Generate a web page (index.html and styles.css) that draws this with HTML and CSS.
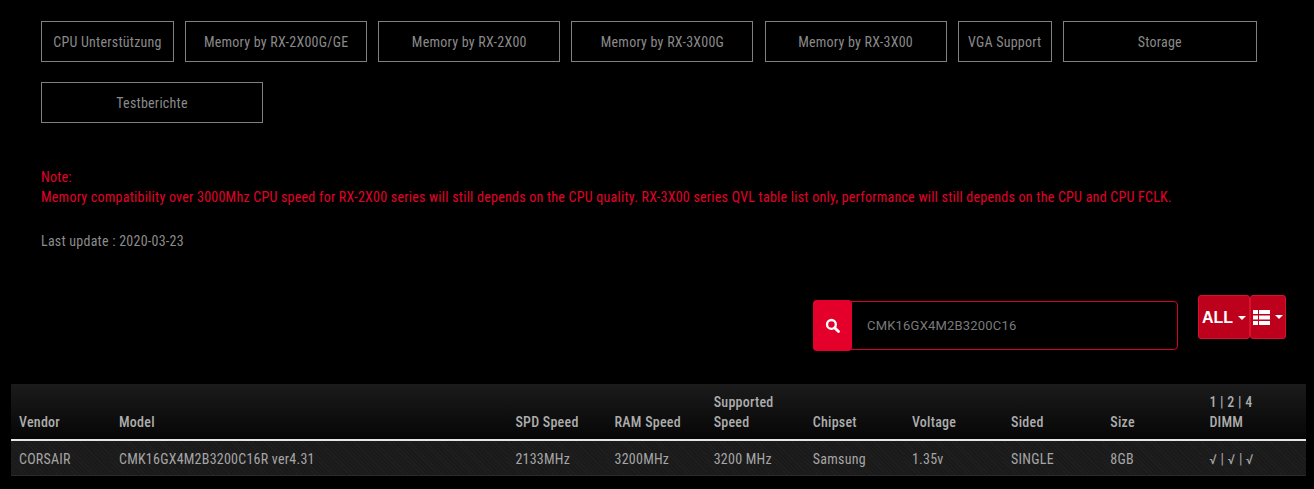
FILE: index.html
```html
<!DOCTYPE html>
<html lang="de">
<head>
<meta charset="utf-8">
<title>Memory Support</title>
<link rel="stylesheet" href="styles.css">
</head>
<body>
<nav class="tabs">
  <a class="tab w133">CPU Unterstützung</a>
  <a class="tab w182">Memory by RX-2X00G/GE</a>
  <a class="tab w182">Memory by RX-2X00</a>
  <a class="tab w182">Memory by RX-3X00G</a>
  <a class="tab w182">Memory by RX-3X00</a>
  <a class="tab w94">VGA Support</a>
  <a class="tab w194">Storage</a>
  <a class="tab w222">Testberichte</a>
</nav>
<section class="notes">
  <p class="note">Note:<br>Memory compatibility over 3000Mhz CPU speed for RX-2X00 series will still depends on the CPU quality. RX-3X00 series QVL table list only, performance will still depends on the CPU and CPU FCLK.</p>
  <p class="update">Last update : 2020-03-23</p>
</section>
<section class="tools">
  <div class="search">
    <span class="search-btn">
      <svg width="15" height="15" viewBox="0 0 14 14" aria-hidden="true"><circle cx="6" cy="6" r="4.1" fill="none" stroke="#fff" stroke-width="2.2"/><path d="M9 9l3.6 3.6" stroke="#fff" stroke-width="2.6" stroke-linecap="round"/></svg>
    </span>
    <span class="search-text">CMK16GX4M2B3200C16</span>
  </div>
  <div class="drop">
    <button class="drop-btn all">ALL<i class="caret"></i></button>
    <button class="drop-btn list">
      <svg width="17" height="15" viewBox="0 0 17 15" aria-hidden="true"><path fill="#fff" d="M0 0h5v4H0zM6 0h11v4H6zM0 5.5h5v4H0zM6 5.5h11v4H6zM0 11h5v4H0zM6 11h11v4H6z"/></svg><i class="caret"></i>
    </button>
  </div>
</section>
<table class="qvl">
  <thead>
    <tr>
      <th class="c-vendor">Vendor</th>
      <th class="c-model">Model</th>
      <th class="c">SPD Speed</th>
      <th class="c">RAM Speed</th>
      <th class="c">Supported<br>Speed</th>
      <th class="c">Chipset</th>
      <th class="c">Voltage</th>
      <th class="c">Sided</th>
      <th class="c">Size</th>
      <th>1 | 2 | 4<br>DIMM</th>
    </tr>
  </thead>
  <tbody>
    <tr>
      <td>CORSAIR</td>
      <td>CMK16GX4M2B3200C16R ver4.31</td>
      <td>2133MHz</td>
      <td>3200MHz</td>
      <td>3200 MHz</td>
      <td>Samsung</td>
      <td>1.35v</td>
      <td>SINGLE</td>
      <td>8GB</td>
      <td>√ | √ | √</td>
    </tr>
  </tbody>
</table>
</body>
</html>
```
FILE: styles.css
```css
* { box-sizing: border-box; }
html, body { margin: 0; padding: 0; }
body {
  background: #000;
  color: #8c8c8c;
  font-family: Roboto, "Liberation Sans", sans-serif;
  font-stretch: 75%;
  font-size: 14px;
  letter-spacing: 0.24px;
  height: 489px;
  overflow: hidden;
}
.tabs {
  display: flex;
  flex-wrap: wrap;
  gap: 20px 11.15px;
  padding: 21px 40px 0 41px;
}
.tab {
  height: 41px;
  padding-top: 1px;
  border: 1px solid #808080;
  display: flex;
  align-items: center;
  justify-content: center;
  color: #8a8a8a;
}
.w133 { width: 133px; }
.w182 { width: 182px; }
.w94 { width: 94px; }
.w194 { width: 194px; }
.w222 { width: 222px; }
.notes { padding: 44px 41px 0; }
.notes p { margin: 0; }
.note { color: #e4002b; line-height: 20px; }
.update { margin-top: 24px !important; line-height: 20px; color: #8c8c8c; }
.tools {
  display: flex;
  justify-content: flex-end;
  align-items: flex-start;
  padding: 44px 28px 0 0;
}
.search {
  width: 365px;
  height: 49px;
  margin-top: 6px;
  border: 1px solid #d8002a;
  border-radius: 4px;
  display: flex;
  align-items: center;
}
.search-btn {
  flex: none;
  width: 39px;
  height: 51px;
  margin-left: -1px;
  background: #e4002b;
  border-radius: 4px;
  display: flex;
  align-items: center;
  justify-content: center;
}
.search-text {
  margin-left: 15px;
  font-stretch: 100%;
  font-size: 13px;
  letter-spacing: 0.2px;
  color: #7a7a7a;
}
.drop { display: flex; margin-left: 20px; }
.drop-btn {
  height: 44px;
  padding: 0;
  background: #bd001c;
  border: 1px solid #d8112f;
  border-radius: 3px;
  color: #fff;
  font-family: "Liberation Sans", sans-serif;
  font-stretch: 100%;
  font-weight: 700;
  font-size: 16px;
  letter-spacing: 0;
  display: flex;
  align-items: center;
}
.all { width: 52px; padding-left: 3px; padding-top: 1px; }
.list { width: 36px; padding-left: 2px; }
.caret {
  width: 0;
  height: 0;
  margin-left: 5px;
  border-top: 4px solid #fff;
  border-left: 4px solid transparent;
  border-right: 4px solid transparent;
}
.qvl {
  width: 1295px;
  margin: 34px 0 0 11px;
  border-collapse: separate;
  border-spacing: 0;
  table-layout: fixed;
}
.qvl th {
  height: 57px;
  padding: 0 8px 7px;
  text-align: left;
  vertical-align: bottom;
  font-weight: 500;
  line-height: 20px;
  color: #adadad;
  background: linear-gradient(#1b1b1b, #060606);
  border-bottom: 2px solid #e6e6e6;
}
.qvl td {
  height: 35px;
  padding: 1px 8px 0;
  color: #a6a6a6;
  background-color: #1a1a1a;
  background-image: repeating-linear-gradient(45deg, #1f1f1f 0 1px, transparent 1px 3px);
  border-bottom: 1px solid #2a2a2a;
}
.c-vendor { width: 100px; }
.c-model { width: 396.4px; }
.c { width: 99.15px; }
```
